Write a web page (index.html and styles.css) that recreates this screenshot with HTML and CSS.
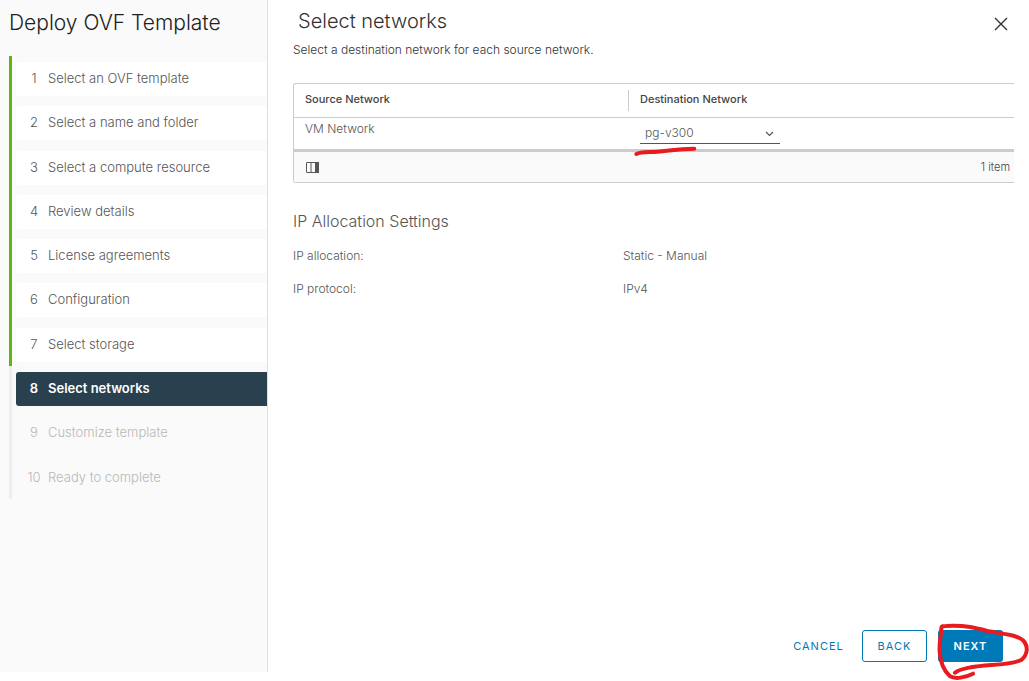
FILE: index.html
```html
<!DOCTYPE html>
<html lang="en">
<head>
<meta charset="utf-8">
<title>Deploy OVF Template</title>
<link rel="stylesheet" href="styles.css">
</head>
<body>
<div class="wizard">
  <aside class="sidebar">
    <h1 class="wizard-title">Deploy OVF Template</h1>
    <ol class="steps">
      <li class="step done"><button class="step-link"><span class="num">1</span>Select an OVF template</button></li>
      <li class="step done"><button class="step-link"><span class="num">2</span>Select a name and folder</button></li>
      <li class="step done"><button class="step-link"><span class="num">3</span>Select a compute resource</button></li>
      <li class="step done"><button class="step-link"><span class="num">4</span>Review details</button></li>
      <li class="step done"><button class="step-link"><span class="num">5</span>License agreements</button></li>
      <li class="step done"><button class="step-link"><span class="num">6</span>Configuration</button></li>
      <li class="step done"><button class="step-link"><span class="num">7</span>Select storage</button></li>
      <li class="step current"><button class="step-link" aria-current="step"><span class="num">8</span>Select networks</button></li>
      <li class="step"><button class="step-link" disabled><span class="num">9</span>Customize template</button></li>
      <li class="step"><button class="step-link" disabled><span class="num">10</span>Ready to complete</button></li>
    </ol>
  </aside>

  <main class="page">
    <header class="page-header">
      <h2 class="page-title">Select networks</h2>
      <button class="close" aria-label="Close">
        <svg width="14" height="14" viewBox="0 0 14 14"><path d="M1 1L13 13M13 1L1 13"/></svg>
      </button>
    </header>
    <p class="intro">Select a destination network for each source network.</p>

    <div class="datagrid">
      <table class="grid">
        <thead>
          <tr><th class="source" scope="col">Source Network</th><th scope="col"><span class="divided">Destination Network</span></th></tr>
        </thead>
        <tbody>
          <tr>
            <td>VM Network</td>
            <td class="destination">
              <div class="select-wrap">
                <select class="select" aria-label="Destination Network"><option>pg-v300</option></select>
                <svg class="chevron" width="9" height="6" viewBox="0 0 9 6"><path d="M1 1L4.5 4.5L8 1"/></svg>
                <svg class="ink underline" width="70" height="16" viewBox="30 204 210 48"><path d="M49 237C62 230 82 232 112 230C150 227 172 222 223 221"/></svg>
              </div>
            </td>
          </tr>
        </tbody>
      </table>
      <div class="grid-footer">
        <button class="columns" aria-label="Manage columns">
          <svg width="13" height="11" viewBox="0 0 13 11"><rect x=".5" y=".5" width="12" height="10" rx=".5"/><path d="M5 1V10"/><path class="solid" d="M9 0H13V11H9Z"/></svg>
        </button>
        <span>1 item</span>
      </div>
    </div>

    <h3 class="section-title">IP Allocation Settings</h3>
    <dl class="settings">
      <dt>IP allocation:</dt><dd>Static - Manual</dd>
      <dt>IP protocol:</dt><dd>IPv4</dd>
    </dl>

    <footer class="actions">
      <button class="btn link">CANCEL</button>
      <button class="btn outline">BACK</button>
      <div class="next-wrap">
        <button class="btn primary">NEXT</button>
        <svg class="ink circle" width="101" height="61" viewBox="444 30 303 183"><path d="M579 191C555 203 526 208 510 199C490 181 481 158 479 125C477 95 484 74 484 54C484 48 489 48 499 48C556 45 590 54 626 64C666 72 704 72 728 90C746 108 744 133 724 150C690 166 624 163 572 172C549 177 535 179 525 188"/></svg>
      </div>
    </footer>
  </main>
</div>
</body>
</html>
```
FILE: styles.css
```css
* { box-sizing: border-box; }

body {
  margin: 0;
  background: #fff;
  color: #565656;
  font: 300 13px/20px Inter, "Noto Sans", sans-serif;
}

button, select { font: inherit; color: inherit; }
button { padding: 0; border: 0; background: none; cursor: pointer; }
h1, h2, h3, p, ol, dl, dd { margin: 0; padding: 0; }

.wizard { display: flex; min-height: 100vh; }

.sidebar {
  flex: 0 0 268px;
  margin-bottom: 9px;
  padding: 8px 0 0 9px;
  border-right: 1px solid #dedede;
  background: #fafafa;
}

.wizard-title {
  color: #212121;
  font-size: 21px;
  font-weight: 300;
  line-height: 30px;
}

.steps {
  display: grid;
  grid-auto-rows: 1fr;
  min-height: 443px;
  margin-top: 18px;
  list-style: none;
}

.step {
  display: flex;
  align-items: flex-start;
  padding: 6px 0 4px 4px;
  border-left: 3px solid #eee;
}
.step.done { border-color: #60b515; }

.step-link {
  display: flex;
  flex: 1;
  gap: 7px;
  height: 34px;
  padding: 6px 11px;
  border-radius: 3px 0 0 3px;
  text-align: left;
  line-height: 20px;
}
.step-link:disabled { color: #b8b8b8; }
.done .step-link { background: #fff; }
.current .step-link { background: #29414e; color: #fff; font-weight: 600; }
.num { width: 14px; text-align: center; }

.page {
  display: flex;
  flex: 1;
  flex-direction: column;
  padding: 6px 15px 19px 25px;
}

.page-header { display: flex; justify-content: space-between; padding-left: 5px; }
.page-title { color: #313131; font-size: 20px; font-weight: 300; line-height: 30px; }
.close { align-self: end; width: 26px; height: 24px; }
.close svg { display: block; margin: auto; fill: none; stroke: #313131; stroke-width: 1.4; }

.intro { margin-top: 4px; color: #313131; font-size: 12px; }

.datagrid {
  margin-top: 23px;
  border: 1px solid #ccc;
  border-right: 0;
  border-radius: 3px 0 0 3px;
}

.grid { width: 100%; border-collapse: separate; border-spacing: 0; table-layout: fixed; }
.grid th {
  height: 34px;
  padding: 0 0 3px 11px;
  border-bottom: 1px solid #ccc;
  color: #454545;
  font-size: 11px;
  font-weight: 500;
  text-align: left;
}
.grid th + th { padding: 0; }
.source { width: 334px; }
.divided { display: block; padding: 0 0 3px 11px; border-left: 1px solid #ccc; line-height: 18px; }
.grid td { height: 34px; padding: 1px 0 0 11px; border-bottom: 3px solid #ccc; vertical-align: top; font-size: 12px; }
.grid .destination { padding: 4px 0 4px 12px; }

.select-wrap { position: relative; width: 140px; }
.select {
  display: block;
  width: 100%;
  height: 22px;
  padding: 1px 20px 0 5px;
  border: 0;
  border-bottom: 1px solid #565656;
  border-radius: 0;
  background: transparent;
  appearance: none;
}
.chevron { position: absolute; top: 9px; right: 6px; fill: none; stroke: #565656; stroke-width: 1.2; pointer-events: none; }

.ink { position: absolute; fill: none; stroke: #e81c1f; stroke-width: 12; stroke-linecap: round; stroke-linejoin: round; pointer-events: none; }
.underline { top: 21px; left: -10px; }
.circle { top: -10px; left: -10px; }

.grid-footer {
  display: flex;
  align-items: center;
  justify-content: space-between;
  height: 30px;
  padding: 0 4px 0 12px;
  background: #fafafa;
  color: #454545;
  font-size: 11px;
}
.columns svg { display: block; fill: none; stroke: #565656; }
.columns .solid { fill: #565656; stroke: none; }

.section-title { margin-top: 28px; font-size: 16px; font-weight: 300; line-height: 20px; }
.settings { display: grid; grid-template-columns: 330px 1fr; row-gap: 13px; margin-top: 15px; font-size: 12px; }

.actions { display: flex; align-items: center; justify-content: flex-end; gap: 11px; margin-top: auto; padding-right: 11px; }
.btn { height: 32px; min-width: 65px; border-radius: 3px; color: #0079b8; font-size: 11px; font-weight: 400; letter-spacing: 1px; }
.outline { border: 1px solid #0079b8; }
.primary { display: block; background: #0079b8; color: #fff; font-weight: 600; }
.next-wrap { position: relative; }
```
